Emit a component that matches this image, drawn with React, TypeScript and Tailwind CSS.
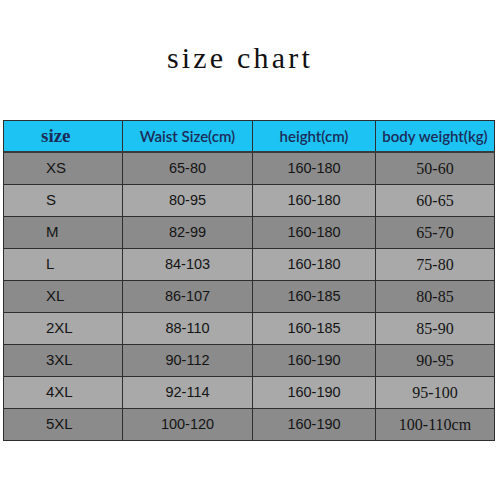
import React from "react";

const rows: [string, string, string, string][] = [
  ["XS", "65-80", "160-180", "50-60"],
  ["S", "80-95", "160-180", "60-65"],
  ["M", "82-99", "160-180", "65-70"],
  ["L", "84-103", "160-180", "75-80"],
  ["XL", "86-107", "160-185", "80-85"],
  ["2XL", "88-110", "160-185", "85-90"],
  ["3XL", "90-112", "160-190", "90-95"],
  ["4XL", "92-114", "160-190", "95-100"],
  ["5XL", "100-120", "160-190", "100-110cm"],
];

const cols = "grid grid-cols-[119px_130px_123px_119px] h-[32px]";
const cell = "flex items-center border-r border-[#2e2e2e]";
const head = "justify-center text-[15px] font-semibold font-['Lato',sans-serif]";
const sans = "font-['Liberation_Sans',sans-serif]";

export default function App() {
  return (
    <div className="w-[500px] h-[500px] bg-white overflow-hidden">
      <div className="h-[120px] flex items-center justify-center pr-[20px] pb-[4px]">
        <h1 className="text-[30px] text-[#111] tracking-[3.2px] leading-none font-['Liberation_Serif',serif]">
          size chart
        </h1>
      </div>
      <div className="ml-[3px] w-[492px] border-l border-t border-[#2e2e2e]">
        <div className={cols + " bg-[#1cc3f3] text-[#1c2b58] border-b-2 border-[#3a3a3a]"}>
          <div className={cell + " pl-[37px] text-[19px] font-bold font-['Liberation_Serif',serif]"}>size</div>
          <div className={cell + " " + head}>Waist Size(cm)</div>
          <div className={cell + " " + head}>height(cm)</div>
          <div className={cell + " " + head}>body weight(kg)</div>
        </div>
        {rows.map((r, i) => (
          <div
            key={r[0]}
            className={
              cols +
              " text-[#141414] border-b border-[#2e2e2e] " +
              (i % 2 === 0 ? "bg-[#8b8b8b]" : "bg-[#a9a9a9]")
            }
          >
            <div className={cell + " pl-[42px] text-[15px] " + sans}>{r[0]}</div>
            <div className={cell + " justify-center text-[14.5px] " + sans}>{r[1]}</div>
            <div className={cell + " justify-center text-[14.5px] " + sans}>{r[2]}</div>
            <div className={cell + " justify-center text-[16px] font-['Liberation_Serif',serif]"}>{r[3]}</div>
          </div>
        ))}
      </div>
    </div>
  );
}
